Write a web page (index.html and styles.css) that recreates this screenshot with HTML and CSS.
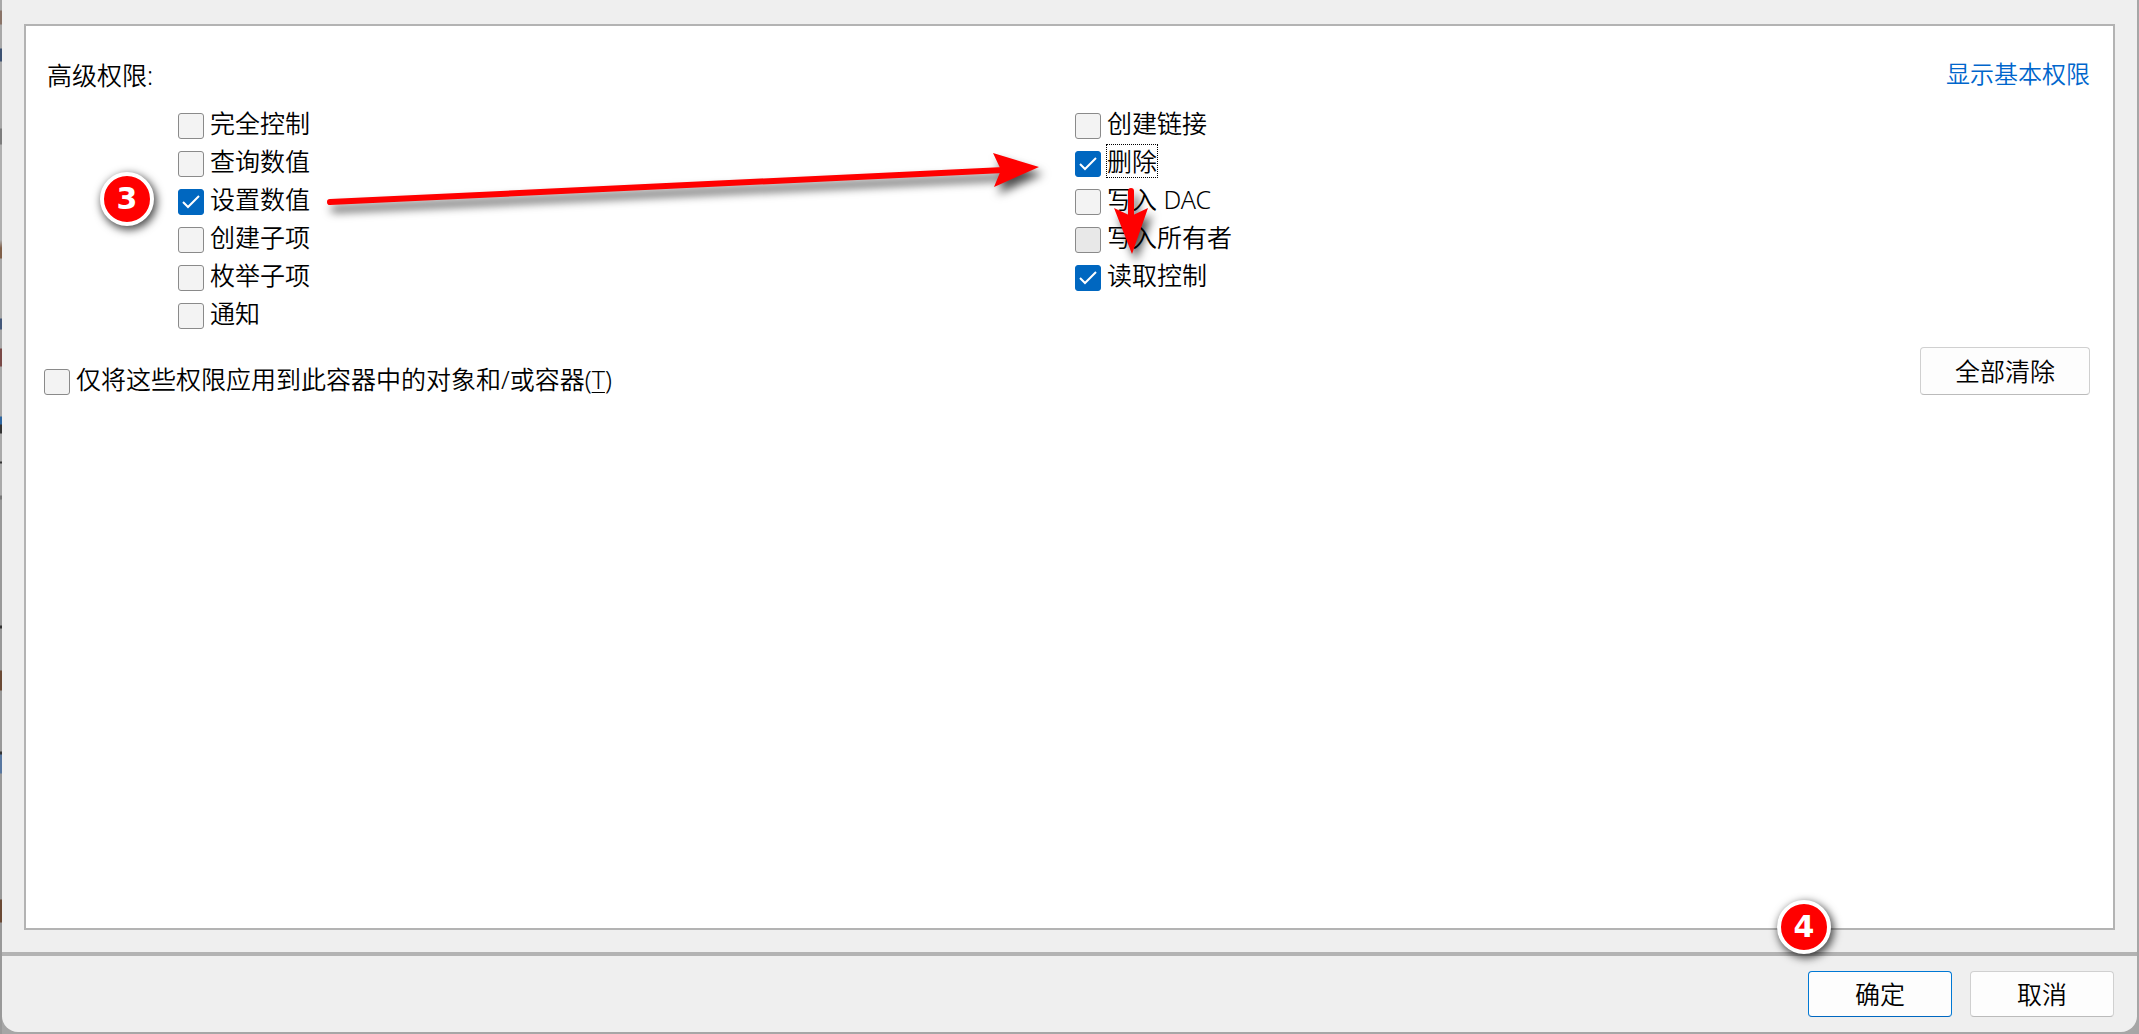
FILE: index.html
```html
<!DOCTYPE html>
<html lang="zh-CN">
  <head>
    <meta charset="utf-8" />
    <title>高级权限</title>
    <link rel="stylesheet" href="styles.css">
  </head>

  <body>
    <div class="dialog">
      <div class="content">
        <div class="panel">
          <div class="panel-header">
            <h1>高级权限:</h1>
            <a href="#">显示基本权限</a>
          </div>

          <div class="permissions">
            <div class="column">
              <label class="check"><input type="checkbox"><span>完全控制</span></label>
              <label class="check"><input type="checkbox"><span>查询数值</span></label>
              <label class="check"><input type="checkbox" checked><span>设置数值</span></label>
              <label class="check"><input type="checkbox"><span>创建子项</span></label>
              <label class="check"><input type="checkbox"><span>枚举子项</span></label>
              <label class="check"><input type="checkbox"><span>通知</span></label>
            </div>
            <div class="column">
              <label class="check"><input type="checkbox"><span>创建链接</span></label>
              <label class="check"><input type="checkbox" checked><span class="focused">删除</span></label>
              <label class="check"><input type="checkbox"><span>写入 DAC</span></label>
              <label class="check"><input type="checkbox" class="dim"><span>写入所有者</span></label>
              <label class="check"><input type="checkbox" checked><span>读取控制</span></label>
            </div>
          </div>

          <div class="panel-footer">
            <label class="check"><input type="checkbox"><span>仅将这些权限应用到此容器中的对象和/或容器(<u>T</u>)</span></label>
            <button type="button" class="btn-clear">全部清除</button>
          </div>

          <!-- step 3 and the arrows -->
          <span class="badge badge-3">3</span>
          <svg class="arrows" width="900" height="140" viewBox="310 130 900 140">
            <g class="arrow">
              <path d="M330 202 L1004 170" />
              <polygon points="1039,167 993,153 1001,170 994,187" />
            </g>
            <g class="arrow">
              <path d="M1131 191 L1131 218" />
              <polygon points="1132,254 1114,208 1131,216 1148,208" />
            </g>
          </svg>
        </div>
      </div>

      <div class="actions">
        <span class="badge badge-4">4</span>
        <button type="button" class="btn-ok">确定</button>
        <button type="button">取消</button>
      </div>
    </div>
  </body>
</html>
```
FILE: styles.css
```css
* {
  box-sizing: border-box;
}

/* Window behind the dialog, only the edges are visible */
body {
  margin: 0;
  padding: 0 2px 2px;
  min-height: 100vh;
  display: flex;
  background-color: #a6a6a6;
  background-image: linear-gradient(to bottom,
    #a8a8a8 10px, #8a7468 11px 24px, #a8a8a8 25px 48px, #3d5272 49px 61px, #a8a8a8 62px 128px,
    #7d7d7d 129px 144px, #b0b0b0 145px 240px, #80604a 248px 258px, #a8a8a8 259px 318px,
    #44587a 319px 329px, #a8a8a8 330px 348px, #7a4a48 349px 366px, #a8a8a8 367px 416px,
    #2e66a0 417px 424px, #333 425px 433px, #aaa 434px 461px, #333 462px 463px, #aaa 464px 495px,
    #777 496px 499px, #999 500px 625px, #333 626px 628px, #999 629px 670px, #6b4a35 671px 690px,
    #999 691px 751px, #333 752px 754px, #5877a0 755px 773px, #999 774px 899px, #6b4a35 900px 922px,
    #999 923px);
  background-size: 2px 100%;
  background-repeat: no-repeat;
  font-family: "Noto Sans", "Noto Sans CJK SC", sans-serif;
  font-size: 25px;
  font-weight: 350;
  line-height: 34px;
  color: #000000;
}

.dialog {
  flex: 1;
  display: flex;
  flex-direction: column;
  background-color: #efefef;
  border-radius: 0 0 16px 16px;
}

.content {
  flex: 1;
  display: flex;
  padding: 24px 22px 22px;
}

.panel {
  position: relative;
  flex: 1;
  padding: 32px 23px 22px 18px;
  background-color: #ffffff;
  border: 2px solid #b3b3b3;
}

.panel-header {
  display: flex;
  justify-content: space-between;
  padding-left: 3px;
  margin-bottom: 15px;
}

h1 {
  margin: 0;
  font-size: 25px;
  font-weight: inherit;
}

a {
  font-size: 24px;
  line-height: 32px;
  color: #0066cc;
  text-decoration: none;
}

/* Two columns of check boxes */
.permissions {
  display: grid;
  grid-template-columns: 1fr 1fr;
  padding: 0 118px 0 134px;
}

.column {
  display: flex;
  flex-direction: column;
  align-items: flex-start;
}

.check {
  display: flex;
  align-items: center;
  gap: 5px;
  height: 38px;
}

.check span {
  padding: 0 1px;
  margin-bottom: 6px;
}

.check .focused {
  outline: 1px dotted #000000;
  outline-offset: -1px;
}

input {
  appearance: none;
  width: 26px;
  height: 26px;
  margin: 0;
  flex: none;
  background-color: #f3f3f3;
  border: 1px solid #8a8a8a;
  border-radius: 3px;
}

input.dim {
  background-color: #e8e8e8;
}

input:checked {
  border-color: #0067c0;
  background: #0067c0 url("data:image/svg+xml,%3Csvg xmlns='http://www.w3.org/2000/svg' viewBox='0 0 24 24'%3E%3Cpath d='M4 12L9 17L20 6' fill='none' stroke='white' stroke-width='2'/%3E%3C/svg%3E") center / 24px 24px no-repeat;
}

.panel-footer {
  display: flex;
  justify-content: space-between;
  align-items: flex-start;
  margin-top: 12px;
}

.panel-footer .check {
  margin-top: 16px;
}

u {
  text-decoration-thickness: 1px;
  text-underline-offset: 3px;
}

button {
  width: 144px;
  height: 46px;
  padding: 0;
  font-family: inherit;
  font-size: 25px;
  font-weight: inherit;
  line-height: 34px;
  color: #000000;
  background-color: #fdfdfd;
  border: 1px solid #d0d0d0;
  border-bottom-color: #bbbbbb;
  border-radius: 4px;
}

.btn-clear {
  width: 170px;
  height: 48px;
}

.btn-ok {
  border-color: #0078d4;
  border-bottom-color: #0067c0;
}

.actions {
  position: relative;
  display: flex;
  justify-content: flex-end;
  gap: 18px;
  padding: 15px 23px;
  border-top: 4px solid #b3b3b3;
}

/* Numbered steps on top of the dialog */
.badge {
  position: absolute;
  width: 54px;
  height: 54px;
  border: 4px solid #ffffff;
  border-radius: 50%;
  background-color: #ff0000;
  box-shadow: 2px 3px 8px 1px rgba(0, 0, 0, 0.7);
  color: #ffffff;
  font-family: "DejaVu Sans", sans-serif;
  font-size: 30px;
  font-weight: bold;
  line-height: 46px;
  text-align: center;
}

.badge-3 {
  left: 74px;
  top: 146px;
}

.badge-4 {
  right: 306px;
  top: -56px;
}

.arrows {
  position: absolute;
  left: 284px;
  top: 104px;
  pointer-events: none;
}

.arrow {
  fill: #ff0000;
  filter: drop-shadow(4px 7px 5px rgba(0, 0, 0, 0.7));
}

.arrow path {
  fill: none;
  stroke: #ff0000;
  stroke-width: 6px;
  stroke-linecap: round;
}
```
